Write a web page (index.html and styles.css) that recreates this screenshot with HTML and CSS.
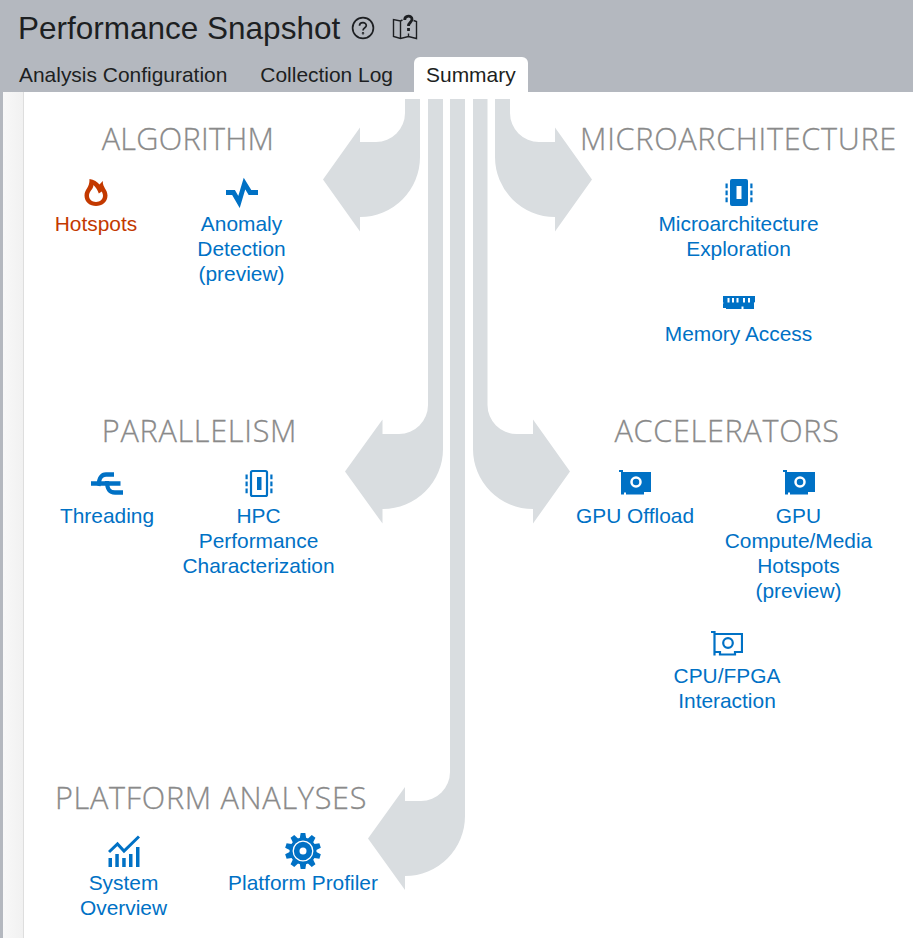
FILE: index.html
```html
<!DOCTYPE html>
<html lang="en">
<head>
<meta charset="utf-8">
<title>Performance Snapshot</title>
<link rel="stylesheet" href="styles.css">
</head>
<body>
<header class="header">
  <div class="title-row">
    <h1 class="title">Performance Snapshot</h1>
    <svg class="help" width="24" height="24" viewBox="0 0 24 24" fill="none" stroke="#1d1f22" stroke-width="1.7"><circle cx="12" cy="12" r="10.4"/><path d="M8.5 9.8C8.5 5.6 15.3 5.6 15.3 9.5C15.3 11.8 12 11.8 12 14.6"/><circle cx="12" cy="17.2" r=".4"/></svg>
    <svg class="guide" width="26" height="26" viewBox="0 0 26 26" fill="none" stroke="#1d1f22" stroke-width="1.4"><path d="M10.500 6L8.500 7L1.500 5.500V22.500L8.500 24.500L16.500 22.500L24.500 24.500V7.500L21.500 6.500M8.500 7V24.500M16.500 19.500V22.500"/><path d="M12.700 6C12.700 1 20 1 20 5.200C20 8.400 16.500 8.400 16.500 12" stroke-width="2.800"/><path d="M16.500 14V17" stroke-width="2.800"/></svg>
  </div>
  <nav class="tabs">
    <a class="tab">Analysis Configuration</a>
    <a class="tab">Collection Log</a>
    <a class="tab active">Summary</a>
  </nav>
</header>
<main class="body">
  <div class="gutter"></div>
  <div class="map">
    <svg class="arrows" width="889" height="846" viewBox="24 92 889 846" fill="#d9dde0">
      <path d="M405 99H420V157A60 60 0 0 1 360 217V231.500L323 179.500L360 127.500V142H376A29 29 0 0 0 405 113Z"/>
      <path d="M510 99H495V157A60 60 0 0 0 555 217V231.500L592 179.500L555 127.500V142H539A29 29 0 0 1 510 113Z"/>
      <path d="M428 99H443V449A60 60 0 0 1 382.500 509V523.500L345 471.500L382.500 419.500V434H399A29 29 0 0 0 428 405Z"/>
      <path d="M487.500 99H473V449A60 60 0 0 0 533 509V523.500L570 471.500L533 419.500V434H516.500A29 29 0 0 1 487.500 405Z"/>
      <path d="M450 99H465V816A60 60 0 0 1 405 876V890L368 838.500L405 787V801H421A29 29 0 0 0 450 772Z"/>
    </svg>
    <section class="group algorithm">
      <h2>ALGORITHM</h2>
      <div class="items">
        <a class="item hot"><svg width="32" height="32" viewBox="0 0 32 32"><path fill="currentColor" fill-rule="evenodd" d="M9.500 3C14 3.500 17.500 6 19.500 8.500L22.800 5C22.500 11.500 27.500 13.500 27.500 19.500C27.500 26 22 30 16 30S4.500 26 4.500 19.500C4.500 13 9.800 12 9.500 3ZM13.500 9C13.300 13.500 9 15 9 19.800C9 23.500 12 26 16 26S23 23.500 23 19.800C23 18 22.300 17 21.800 15.500L18.800 17.500C17.800 14.500 16 11.500 13.500 9Z"/></svg><span>Hotspots</span></a>
        <a class="item"><svg width="32" height="32" viewBox="0 0 32 32"><path fill="none" stroke="currentColor" stroke-width="4.800" d="M0 16.500H7.500L13 26L18.500 7.500L24 16.500H32"/></svg><span>Anomaly<br>Detection<br>(preview)</span></a>
      </div>
    </section>
    <section class="group micro">
      <h2>MICROARCHITECTURE</h2>
      <div class="items">
        <a class="item"><svg width="32" height="32" viewBox="0 0 32 32"><rect x="7" y="3" width="18" height="27" rx="2" fill="currentColor"/><path fill="#fff" d="M13.500 10h5v13h-5z"/><path fill="none" stroke="currentColor" stroke-width="2.200" stroke-dasharray="4.800 2.200" d="M3.600 7.500V27M28.400 7.500V27"/></svg><span>Microarchitecture<br>Exploration</span></a>
        <a class="item"><svg width="32" height="32" viewBox="0 0 32 32"><path fill="currentColor" fill-rule="evenodd" d="M0 10H32V16A1.500 1.500 0 0 0 31 18V20H31V23H20.500V20.500H18.500V23H3V22H0V18A1.500 1.500 0 0 0 0 16ZM4.500 12v4.500h2V12ZM9 12v4.500h2V12ZM13.500 12v4.500h2V12ZM20 12v4.500h2V12ZM25 12v4.500h2V12Z"/></svg><span>Memory Access</span></a>
      </div>
    </section>
    <section class="group parallelism">
      <h2>PARALLELISM</h2>
      <div class="items">
        <a class="item"><svg width="32" height="32" viewBox="0 0 32 32"><path fill="none" stroke="currentColor" stroke-width="4.300" d="M0 15.500H29.500M23 6.500H15C10 6.500 8 10 7.500 18M16 13C16 22 18.500 24.500 24 24.500H32"/></svg><span>Threading</span></a>
        <a class="item"><svg width="32" height="32" viewBox="0 0 32 32"><rect x="8" y="3" width="16" height="25" rx="1.500" fill="none" stroke="currentColor" stroke-width="2.200"/><path fill="currentColor" d="M14 9h4.500v13H14z"/><path fill="none" stroke="currentColor" stroke-width="2.200" stroke-dasharray="4.800 2.200" d="M3.600 6.500V26M28.400 6.500V26"/></svg><span>HPC<br>Performance<br>Characterization</span></a>
      </div>
    </section>
    <section class="group accelerators">
      <h2>ACCELERATORS</h2>
      <div class="items">
        <a class="item"><svg width="32" height="32" viewBox="0 0 32 32"><path fill="currentColor" d="M0 2H4V4H32V24H25V26.500H7V24.500H5V26.500H2V4H0Z"/><circle cx="17" cy="14" r="4.500" fill="none" stroke="#fff" stroke-width="2.500"/></svg><span>GPU Offload</span></a>
        <a class="item"><svg width="32" height="32" viewBox="0 0 32 32"><path fill="currentColor" d="M0 2H4V4H32V24H25V26.500H7V24.500H5V26.500H2V4H0Z"/><circle cx="17" cy="14" r="4.500" fill="none" stroke="#fff" stroke-width="2.500"/></svg><span>GPU<br>Compute/Media<br>Hotspots<br>(preview)</span></a>
        <a class="item wide"><svg width="32" height="32" viewBox="0 0 32 32" fill="none" stroke="currentColor" stroke-width="2.200"><path d="M0 4H3.500V27.500M4 6H31V24H24V26.500H9V24H4"/><circle cx="17" cy="15" r="4.800"/></svg><span>CPU/FPGA<br>Interaction</span></a>
      </div>
    </section>
    <section class="group platform">
      <h2>PLATFORM ANALYSES</h2>
      <div class="items">
        <a class="item"><svg width="32" height="32" viewBox="0 0 32 32"><path fill="none" stroke="currentColor" stroke-width="3" d="M1 17L9.500 9L16 16L31 1.500"/><path fill="currentColor" d="M.5 23H4v9H.5zM7.300 19h3.500v13H7.300zM14.200 23h3.500v9h-3.500zM21 19h3.500v13H21zM28 12h3.500v20H28z"/></svg><span>System<br>Overview</span></a>
        <a class="item"><svg class="gear" width="36" height="36" viewBox="-18 -18 36 36"><g fill="currentColor"><circle r="13.500"/><path id="tooth" d="M-3.200 -13L-2.300 -18H2.300L3.200 -13V13L2.300 18H-2.300L-3.200 13Z"/><use href="#tooth" transform="rotate(36)"/><use href="#tooth" transform="rotate(72)"/><use href="#tooth" transform="rotate(108)"/><use href="#tooth" transform="rotate(144)"/></g><circle r="9.800" fill="none" stroke="#fff" stroke-width="1.300"/><circle r="3.500" fill="#fff"/></svg><span>Platform Profiler</span></a>
      </div>
    </section>
  </div>
</main>
</body>
</html>
```
FILE: styles.css
```css
* { box-sizing: border-box; }

body {
  margin: 0;
  height: 938px;
  overflow: hidden;
  background: #b4b8bf;
  color: #1d1f22;
  font: 20.9px/25px "Liberation Sans", Arial, sans-serif;
}

.header { height: 92px; display: flex; flex-direction: column; justify-content: space-between; }
.title-row { display: flex; align-items: center; height: 56px; padding-left: 18px; }
.title { margin: 0; font-size: 31.5px; font-weight: 400; line-height: 36px; white-space: nowrap; }
.help { margin-left: 11px; }
.guide { margin-left: 17px; margin-top: -2px; }

.tabs { display: flex; height: 35px; padding-left: 7px; gap: 9px; font-size: 20.95px; }
.tab { padding: 5px 12px; white-space: nowrap; }
.active { background: #fff; border-radius: 6px 6px 0 0; }

.body { display: flex; height: 846px; margin-left: 3px; background: #fff; }
.gutter { width: 21px; border-right: 1px solid #dedede; background: linear-gradient(90deg, #f8f8f8, #f1f1f1); }

.map {
  flex: 1;
  display: grid;
  grid-template-columns: 526px 363px;
  grid-template-rows: 292px 367px 187px;
}
.arrows { grid-area: 1 / 1 / 4 / 3; }

.group { padding-top: 26px; z-index: 1; }
.group h2 {
  margin: 0 0 18px;
  font: 300 30.6px/40px "Open Sans", "Noto Sans", sans-serif;
  letter-spacing: .7px;
  color: #8a8a8a;
  -webkit-text-stroke: .3px #8a8a8a;
  text-align: center;
  white-space: nowrap;
}
.items { display: grid; row-gap: 24px; }
.item { display: flex; flex-direction: column; align-items: center; gap: 3px; padding-bottom: 1px; color: #0071c5; text-align: center; white-space: nowrap; }
.hot { color: #c33900; }
.wide { grid-column: 1 / -1; }
.gear { margin: -2px; }

.algorithm { grid-area: 1 / 1; margin-left: 16px; width: 296px; }
.algorithm h2 { letter-spacing: .3px; }
.algorithm .items { grid-template-columns: 112px 179px; }
.parallelism { grid-area: 2 / 1; margin-left: 16px; width: 319px; }
.parallelism .items { grid-template-columns: 134px 169px; }
.platform { grid-area: 3 / 1; margin-left: 16px; width: 342px; }
.platform .items { grid-template-columns: 167px 192px; }
.micro { grid-area: 1 / 2; margin-left: 24px; width: 329px; }
.accelerators { grid-area: 2 / 2; width: 354px; }
.accelerators .items { grid-template-columns: 170px 157px; }
.accelerators .wide { width: 354px; }
```
